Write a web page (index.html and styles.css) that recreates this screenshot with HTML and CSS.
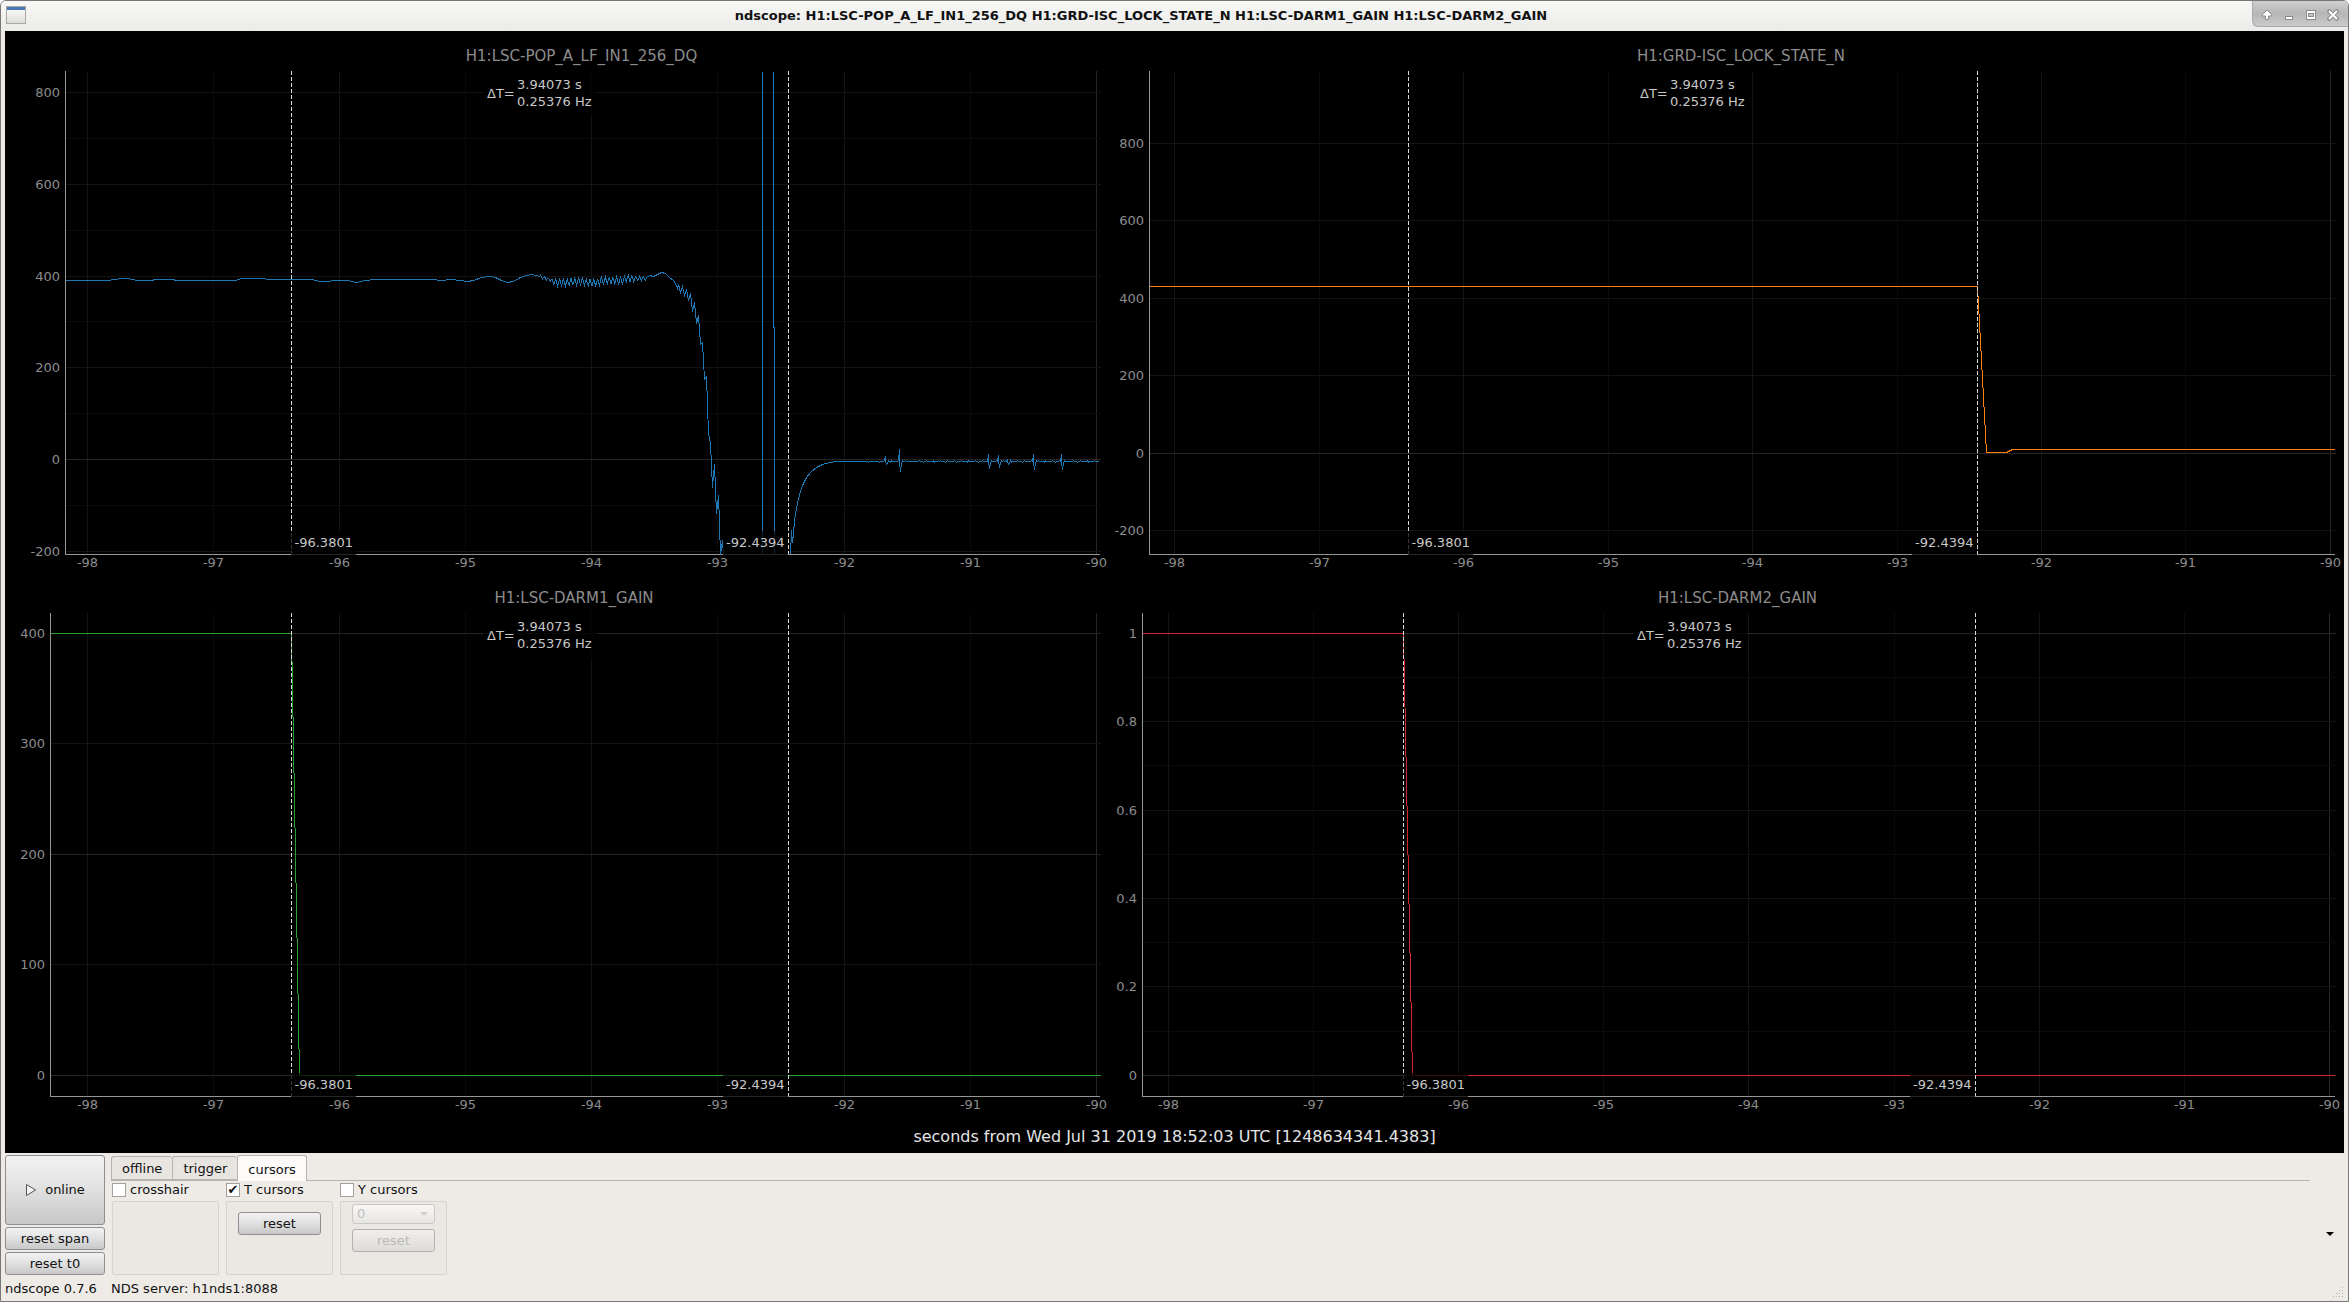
FILE: index.html
```html
<!DOCTYPE html>
<html lang="en">
<head>
  <meta charset="UTF-8">
  <meta name="viewport" content="width=device-width, initial-scale=1.0">
  <title>ndscope</title>
  <link rel="stylesheet" href="styles.css">
</head>
<body>
  <div class="window">
    <header class="titlebar">
      <svg class="app-icon" width="20" height="18" viewBox="0 0 20 18">
        <defs>
          <linearGradient id="page" x1="0" y1="0" x2="0" y2="1">
            <stop offset="0" stop-color="#ffffff"/>
            <stop offset="1" stop-color="#dcdcd8"/>
          </linearGradient>
        </defs>
        <rect x="0.5" y="0.5" width="19" height="17" fill="url(#page)" stroke="#a8a8a4"/>
        <rect x="1" y="1" width="18" height="3" fill="#4a76b4"/>
      </svg>
      <h1>ndscope: H1:LSC-POP_A_LF_IN1_256_DQ H1:GRD-ISC_LOCK_STATE_N H1:LSC-DARM1_GAIN H1:LSC-DARM2_GAIN</h1>
      <div class="window-controls">
        <button type="button" aria-label="Keep above">
          <svg width="12" height="12" viewBox="0 0 12 12"><path d="M6 1 L10.5 5.5 V7 H7.5 V10.5 H4.5 V7 H1.5 V5.5 Z" fill="#fff" stroke="#8a8a8a"/></svg>
        </button>
        <button type="button" aria-label="Minimize">
          <svg width="12" height="12" viewBox="0 0 12 12"><rect x="2.5" y="7.5" width="7" height="3" fill="#fff" stroke="#8a8a8a"/></svg>
        </button>
        <button type="button" aria-label="Maximize">
          <svg width="12" height="12" viewBox="0 0 12 12"><rect x="1.5" y="1.5" width="9" height="9" fill="#fff" stroke="#8a8a8a"/><rect x="3.5" y="4.5" width="5" height="3" fill="#c4c4c4" stroke="#8a8a8a"/></svg>
        </button>
        <button type="button" aria-label="Close">
          <svg width="12" height="12" viewBox="0 0 12 12"><path d="M1 1 L11 11 M11 1 L1 11" stroke="#8a8a8a" stroke-width="4"/><path d="M2 2 L10 10 M10 2 L2 10" stroke="#fff" stroke-width="2"/></svg>
        </button>
      </div>
    </header>

    <main class="scope">
      <div class="plots">
        <svg class="plot" id="pop"></svg>
        <svg class="plot" id="guardian"></svg>
        <svg class="plot" id="darm1"></svg>
        <svg class="plot" id="darm2"></svg>
      </div>
      <p class="time-label">seconds from Wed Jul 31 2019 18:52:03 UTC [1248634341.4383]</p>
    </main>

    <section class="controls">
      <div class="actions">
        <button type="button" class="btn online">
          <svg width="12" height="14" viewBox="0 0 12 14"><path d="M1.5 1.5 L10.5 7 L1.5 12.5 Z" fill="#f4f4f4" stroke="#555"/></svg>
          online
        </button>
        <button type="button" class="btn">reset span</button>
        <button type="button" class="btn">reset t0</button>
      </div>
      <div class="tab-area">
        <div class="tabs" role="tablist">
          <button type="button" class="tab" role="tab">offline</button>
          <button type="button" class="tab" role="tab">trigger</button>
          <button type="button" class="tab active" role="tab" aria-selected="true">cursors</button>
        </div>
        <div class="cursor-groups">
          <div class="group">
            <label><input type="checkbox"> crosshair</label>
            <div class="frame"></div>
          </div>
          <div class="group">
            <label><input type="checkbox" checked> T cursors</label>
            <div class="frame centered">
              <button type="button" class="btn">reset</button>
            </div>
          </div>
          <div class="group">
            <label><input type="checkbox"> Y cursors</label>
            <div class="frame">
              <div class="select-box">
                <select aria-label="Y cursor plot" disabled>
                  <option>0</option>
                </select>
              </div>
              <button type="button" class="btn" disabled>reset</button>
            </div>
          </div>
        </div>
      </div>
      <button type="button" class="more" aria-label="More"></button>
    </section>

    <footer class="statusbar">
      <span class="version">ndscope 0.7.6</span>
      <span>NDS server: h1nds1:8088</span>
      <svg class="grip" width="12" height="12" viewBox="0 0 12 12" fill="#b4b0aa">
        <path d="M10 1h1v1h-1z M7 4h1v1h-1z M10 4h1v1h-1z M4 7h1v1h-1z M7 7h1v1h-1z M10 7h1v1h-1z M1 10h1v1h-1z M4 10h1v1h-1z M7 10h1v1h-1z M10 10h1v1h-1z"/>
      </svg>
    </footer>
  </div>

  <script src="plots.js"></script>
</body>
</html>
```

FILE: styles.css
```css
* {
  margin: 0;
  padding: 0;
  box-sizing: border-box;
}

body {
  height: 100vh;
  font-family: 'DejaVu Sans', sans-serif;
  font-size: 13px;
  line-height: 16px;
  color: #111;
  background: #fff;
  overflow: hidden;
}

button, select, input {
  font: inherit;
  color: inherit;
}

.window {
  height: 100%;
  display: flex;
  flex-direction: column;
  border: 1px solid #777;
  border-radius: 6px 6px 0 0;
  background: #eeebe7;
  overflow: hidden;
}

/* title bar */
.titlebar {
  display: flex;
  align-items: flex-start;
  height: 30px;
  padding-left: 5px;
  background: linear-gradient(#f7f7f6, #ebebea);
}

.app-icon {
  margin-top: 5px;
}

.titlebar h1 {
  flex: 1;
  padding-left: 4px;
  font-size: 13px;
  line-height: 29px;
  text-align: center;
}

.window-controls {
  display: flex;
  gap: 10px;
  width: 96px;
  height: 26px;
  padding: 8px;
  border-left: 1px solid #aaa;
  border-bottom: 1px solid #aaa;
  border-radius: 0 0 0 6px;
  background: linear-gradient(#d0d0d0, #b6b6b6 50%, #cacaca);
}

.window-controls button {
  width: 12px;
  height: 12px;
  border: none;
  background: none;
}

.window-controls svg {
  display: block;
}

/* plots */
.scope {
  flex: 1;
  min-height: 0;
  display: flex;
  flex-direction: column;
  margin: 0 4px;
  padding: 10px 9px 0;
  background: #000;
}

.plots {
  flex: 1;
  min-height: 0;
  display: grid;
  grid-template-columns: 1086fr 1235fr;
  grid-template-rows: 1fr 1fr;
}

.plot {
  width: 100%;
  height: 100%;
  min-height: 0;
  overflow: visible;
}

.plot line, .plot polyline {
  fill: none;
  shape-rendering: crispEdges;
}

.plot text {
  font-size: 13px;
  fill: #8c8c8c;
}

.plot .plot-title {
  font-size: 15px;
}

.plot .cursor-text {
  fill: #c8c8c8;
}

.plot .axis {
  stroke: #969696;
}

.plot .cursor {
  stroke: #d8d8d8;
  stroke-dasharray: 4 2;
}

.plot .label-bg {
  fill: rgba(0, 0, 0, 0.75);
}

.grid-1 { stroke: #262626; }
.grid-2 { stroke: #131313; }
.grid-3 { stroke: #0b0b0b; }

.time-label {
  height: 28px;
  font-size: 16px;
  line-height: 24px;
  text-align: center;
  color: #e4e4e4;
}

/* control panel */
.controls {
  display: flex;
  align-items: flex-start;
  gap: 6px;
  padding: 2px 4px 0;
}

.btn {
  height: 23px;
  border: 1px solid #8e8e8e;
  border-radius: 3px;
  background: linear-gradient(#f2f2f2, #e2e2e2 45%, #c8c8c8);
}

.btn:disabled {
  color: #bcbab7;
  border-color: #b4b2b0;
  background: linear-gradient(#f0efed, #dedcda);
}

.actions {
  display: flex;
  flex-direction: column;
  gap: 2px;
  width: 100px;
}

.actions .online {
  display: flex;
  align-items: center;
  justify-content: center;
  gap: 8px;
  height: 70px;
}

.tab-area {
  flex: 1;
}

.tabs {
  display: flex;
  align-items: flex-end;
  height: 26px;
  border-bottom: 1px solid #b6b3b0;
}

.tab {
  height: 24px;
  padding: 2px 10px 0;
  border: 1px solid #b6b3b0;
  border-right: none;
  border-radius: 3px 3px 0 0;
  background: #e8e5e1;
}

.tab.active {
  height: 26px;
  margin-bottom: -1px;
  border-right: 1px solid #b6b3b0;
  border-bottom: none;
  background: #fcfbfa;
}

.cursor-groups {
  display: flex;
  gap: 7px;
  padding: 2px 1px 0;
}

.group {
  width: 107px;
}

.group label {
  display: flex;
  align-items: center;
  gap: 4px;
  height: 14px;
  margin-bottom: 4px;
  line-height: 18px;
  white-space: nowrap;
}

.group input {
  appearance: none;
  width: 14px;
  height: 14px;
  border: 1px solid #a5a29e;
  background: #fff;
}

.group input:checked::after {
  content: "✔";
  display: block;
  line-height: 12px;
  text-align: center;
}

.frame {
  display: flex;
  flex-direction: column;
  gap: 5px;
  height: 74px;
  padding: 2px 11px;
  border: 1px solid #d6d3cf;
  border-radius: 2px;
  background: #ebe8e4;
}

.frame.centered {
  padding-top: 10px;
}

.select-box {
  position: relative;
  height: 20px;
}

.select-box::after {
  content: "";
  position: absolute;
  right: 7px;
  top: 8px;
  border: 4px solid transparent;
  border-top-color: #d2d0cd;
  border-bottom: none;
}

.select-box select {
  appearance: none;
  display: block;
  width: 100%;
  height: 20px;
  padding-left: 4px;
  border: 1px solid #cac8c5;
  border-radius: 3px;
  background: linear-gradient(#f8f7f6, #e8e6e3);
  color: #c0bebb;
  opacity: 1;
}

.more {
  align-self: center;
  width: 28px;
  height: 20px;
  margin-top: 38px;
  border: none;
  background: none;
}

.more::before {
  content: "";
  display: block;
  width: 0;
  margin: 0 auto;
  border: 4px solid transparent;
  border-top-color: #000;
  border-bottom: none;
}

/* status bar */
.statusbar {
  display: flex;
  gap: 6px;
  height: 26px;
  padding: 0 4px;
  line-height: 28px;
}

.version {
  width: 100px;
}

.grip {
  align-self: flex-end;
  margin: 0 0 3px auto;
}
```

FILE: plots.js
```js
const SVG_NS = 'http://www.w3.org/2000/svg';
const T_CURSORS = [-96.3801, -92.4394];

// photodiode trace, sampled on a 1035 x 483 raster of the view
function popTrace() {
  const slow = [[0, 209], [42, 209], [50, 208], [55, 207], [62, 207], [72, 209], [86, 209], [90, 208],
    [106, 208], [112, 209], [170, 209], [176, 207], [196, 207], [204, 208], [246, 208], [255, 210],
    [262, 210], [270, 209], [282, 209], [291, 211], [300, 209], [310, 208], [366, 208], [376, 209],
    [386, 208], [394, 209], [402, 210], [408, 209], [416, 206], [424, 205], [430, 206], [436, 209],
    [442, 211], [448, 210], [455, 206], [461, 204], [467, 203], [474, 205]];

  const ripple = [];
  for (let x = 475; x < 582; x++) {
    const base = x < 490 ? 205 + (x - 475) * 0.35 : x < 505 ? 211 : x < 520 ? 210 : x < 535 ? 211 : x < 560 ? 209 : 207;
    const amp = x < 488 ? 1.5 : x < 570 ? 4 : 2;
    ripple.push([x, base + Math.sin(x * 1.65) * amp]);
  }

  const fall = [[584, 204], [588, 205], [592, 203], [596, 201], [600, 202], [604, 206], [608, 209],
    [610, 212], [612, 217], [613, 213], [615, 221], [617, 215], [619, 224], [621, 218], [623, 229],
    [625, 222], [627, 240], [629, 231], [631, 252], [633, 244], [635, 273], [637, 271], [639, 308],
    [641, 305], [643, 362], [645, 372], [647, 416], [649, 393], [651, 442], [653, 424], [655, 483],
    [657, 469], [658, 483]];
  const spikes = [[[697, 0], [697, 483]], [[708, 0], [708, 256], [709, 256], [709, 483]]];

  const settle = [[725, 483], [726, 459], [727, 471], [728, 462], [729, 449], [730, 442], [732, 432],
    [734, 423], [737, 414], [741, 406], [746, 400], [751, 396], [757, 393], [764, 391], [772, 390]];
  const kicks = { 820: [-5, 3], 834: [-12, 10], 923: [-7, 7], 933: [-6, 5], 942: [-2, 3], 968: [-7, 8], 996: [-7, 8] };
  for (let x = 773; x <= 1034; x++) {
    const kick = kicks[x];
    if (kick) {
      settle.push([x, 390 + kick[0]], [x, 390], [x + 1, 390 + kick[1]], [x + 2, 392], [x + 3, 389]);
      x += 3;
    } else {
      settle.push([x, 390 + (x > 795 && x % 11 === 0 ? 1 : 0) - (x > 815 && x % 7 === 0 ? 1 : 0)]);
    }
  }
  return [slow.concat(ripple, fall), ...spikes, settle];
}

const plots = [
  {
    id: 'pop', title: 'H1:LSC-POP_A_LF_IN1_256_DQ', color: '#1f77b4', left: 51,
    x: [-98.178, -89.97], y: [-206, 847], step: 200, minor: 100, bright: 1000,
    raster: popTrace()
  },
  {
    id: 'guardian', title: 'H1:GRD-ISC_LOCK_STATE_N', color: '#ff7f0e', left: 49,
    x: [-98.178, -89.968], y: [-260, 987], step: 200, minor: 200, bright: 1000,
    data: [[-98.178, 430], [-92.4394, 430], [-92.383, 3], [-92.245, 3], [-92.2, 10], [-89.97, 10]]
  },
  {
    id: 'darm1', title: 'H1:LSC-DARM1_GAIN', color: '#2ca02c', left: 36,
    x: [-98.297, -89.97], y: [-18.6, 418.5], step: 100, minor: 100, bright: 200,
    data: [[-98.297, 400], [-96.3801, 400], [-96.317, 0], [-89.97, 0]]
  },
  {
    id: 'darm2', title: 'H1:LSC-DARM2_GAIN', color: '#d62728', left: 42,
    x: [-98.182, -89.962], y: [-0.0466, 1.046], step: 0.2, minor: 0.1, bright: 1,
    data: [[-98.182, 1], [-96.3801, 1], [-96.318, 0], [-89.965, 0]]
  }
];

function add(parent, name, attrs, text) {
  const el = document.createElementNS(SVG_NS, name);
  for (const key in attrs) el.setAttribute(key, attrs[key]);
  if (text !== undefined) el.textContent = text;
  parent.appendChild(el);
  return el;
}

function isMultiple(value, step) {
  return Math.abs(value / step - Math.round(value / step)) < 0.001;
}

function draw(plot) {
  const svg = document.getElementById(plot.id);
  svg.innerHTML = '';
  const box = svg.getBoundingClientRect();
  const left = plot.left, right = Math.round(box.width);
  const top = 30, bottom = Math.round(box.height) - 29;
  const snap = v => Math.floor(v) + 0.5;
  const px = t => left + (t - plot.x[0]) / (plot.x[1] - plot.x[0]) * (right - left);
  const py = v => bottom - (v - plot.y[0]) / (plot.y[1] - plot.y[0]) * (bottom - top);
  const line = (x1, y1, x2, y2, cls) => add(svg, 'line', { x1, y1, x2, y2, class: cls });

  add(svg, 'text', { x: (left + right) / 2 - 1, y: 20, 'text-anchor': 'middle', class: 'plot-title' }, plot.title);

  // grid and tick labels
  for (let t = Math.ceil(plot.x[0]); t <= plot.x[1]; t++) {
    const x = snap(px(t));
    line(x, top, x, bottom, t % 10 === 0 ? 'grid-1' : t % 2 === 0 ? 'grid-2' : 'grid-3');
    add(svg, 'text', { x, y: bottom + 13, 'text-anchor': 'middle' }, t);
  }
  for (let i = Math.ceil(plot.y[0] / plot.minor); i * plot.minor <= plot.y[1]; i++) {
    const value = i * plot.minor;
    const y = snap(py(value));
    const major = isMultiple(value, plot.step);
    line(left, y, right + 1, y, isMultiple(value, plot.bright) ? 'grid-1' : major ? 'grid-2' : 'grid-3');
    if (major) add(svg, 'text', { x: left - 5, y: y + 4, 'text-anchor': 'end' }, Number(value.toFixed(1)));
  }
  line(left + 0.5, top, left + 0.5, bottom + 1, 'axis');
  line(left, bottom + 0.5, right, bottom + 0.5, 'axis');

  // trace
  const traces = plot.raster
    ? plot.raster.map(part => part.map(([x, y]) => [left + x * (right - left) / 1035 + 0.5, top + y * (bottom - top) / 483 + 0.5]))
    : [plot.data.map(([t, v]) => [snap(px(t)), snap(py(v))])];
  traces.forEach(points => add(svg, 'polyline', { points: points.join(' '), stroke: plot.color }));

  // T cursors
  const [c1, c2] = T_CURSORS.map(t => snap(px(t)));
  line(c1, top, c1, bottom, 'cursor');
  line(c2, top, c2, bottom, 'cursor');
  add(svg, 'rect', { x: c1 - 0.5, y: bottom - 23, width: 65, height: 25, class: 'label-bg' });
  add(svg, 'rect', { x: c2 - 65.5, y: bottom - 23, width: 65, height: 25, class: 'label-bg' });
  add(svg, 'text', { x: c1 + 3, y: bottom - 7, class: 'cursor-text' }, T_CURSORS[0]);
  add(svg, 'text', { x: c2 - 4, y: bottom - 7, 'text-anchor': 'end', class: 'cursor-text' }, T_CURSORS[1]);

  // time difference readout between the cursors
  const mid = Math.round((c1 + c2) / 2);
  const dt = T_CURSORS[1] - T_CURSORS[0];
  add(svg, 'rect', { x: mid - 57, y: top + 1, width: 114, height: 44, class: 'label-bg' });
  add(svg, 'text', { x: mid - 53, y: top + 27, class: 'cursor-text' }, 'ΔT=');
  add(svg, 'text', { x: mid - 23, y: top + 18, class: 'cursor-text' }, (dt + 0.00003).toFixed(5) + ' s');
  add(svg, 'text', { x: mid - 23, y: top + 35, class: 'cursor-text' }, (1 / dt).toFixed(5) + ' Hz');
}

function drawAll() {
  plots.forEach(draw);
}

drawAll();
window.addEventListener('resize', drawAll);
```
